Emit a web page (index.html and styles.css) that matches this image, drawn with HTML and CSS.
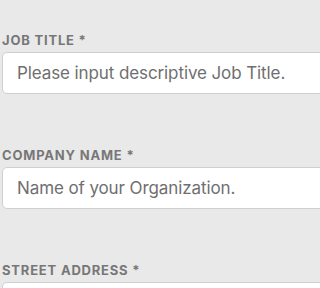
FILE: index.html
```html
<!DOCTYPE html>
<html>
<head>
<meta charset="utf-8">
<link rel="stylesheet" href="styles.css">
</head>
<body>
<form class="form">
  <div class="field">
    <label class="label">Job Title *</label>
    <input class="input" type="text" placeholder="Please input descriptive Job Title.">
  </div>
  <div class="field">
    <label class="label">Company Name *</label>
    <input class="input" type="text" placeholder="Name of your Organization.">
  </div>
  <div class="field">
    <label class="label">Street Address *</label>
    <input class="input" type="text" placeholder="">
  </div>
</form>
</body>
</html>
```
FILE: styles.css
```css
html, body {
  margin: 0;
  padding: 0;
  background: #e9e9e9;
  overflow: hidden;
}
.form {
  width: 100%;
  height: 288px;
  overflow: hidden;
  box-sizing: border-box;
  padding: 32px 0 0 2px;
  display: flex;
  flex-direction: column;
  gap: 53px;
  font-family: Inter, "DejaVu Sans", sans-serif;
}
.field {
  display: flex;
  flex-direction: column;
  gap: 4px;
  flex-shrink: 0;
}
.label {
  font-size: 13px;
  line-height: 16px;
  font-weight: 700;
  letter-spacing: 0.8px;
  text-transform: uppercase;
  color: #777;
}
.input {
  box-sizing: border-box;
  width: calc(100% + 12px);
  height: 42px;
  flex-shrink: 0;
  margin: 0;
  border: 1px solid #cfcfcf;
  border-radius: 5px;
  background: #fff;
  padding: 0 14px;
  font-family: Inter, "DejaVu Sans", sans-serif;
  font-size: 17px;
  letter-spacing: -0.1px;
  color: #555;
  outline: none;
}
.input::placeholder {
  color: #6f6f6f;
  opacity: 1;
}
```
